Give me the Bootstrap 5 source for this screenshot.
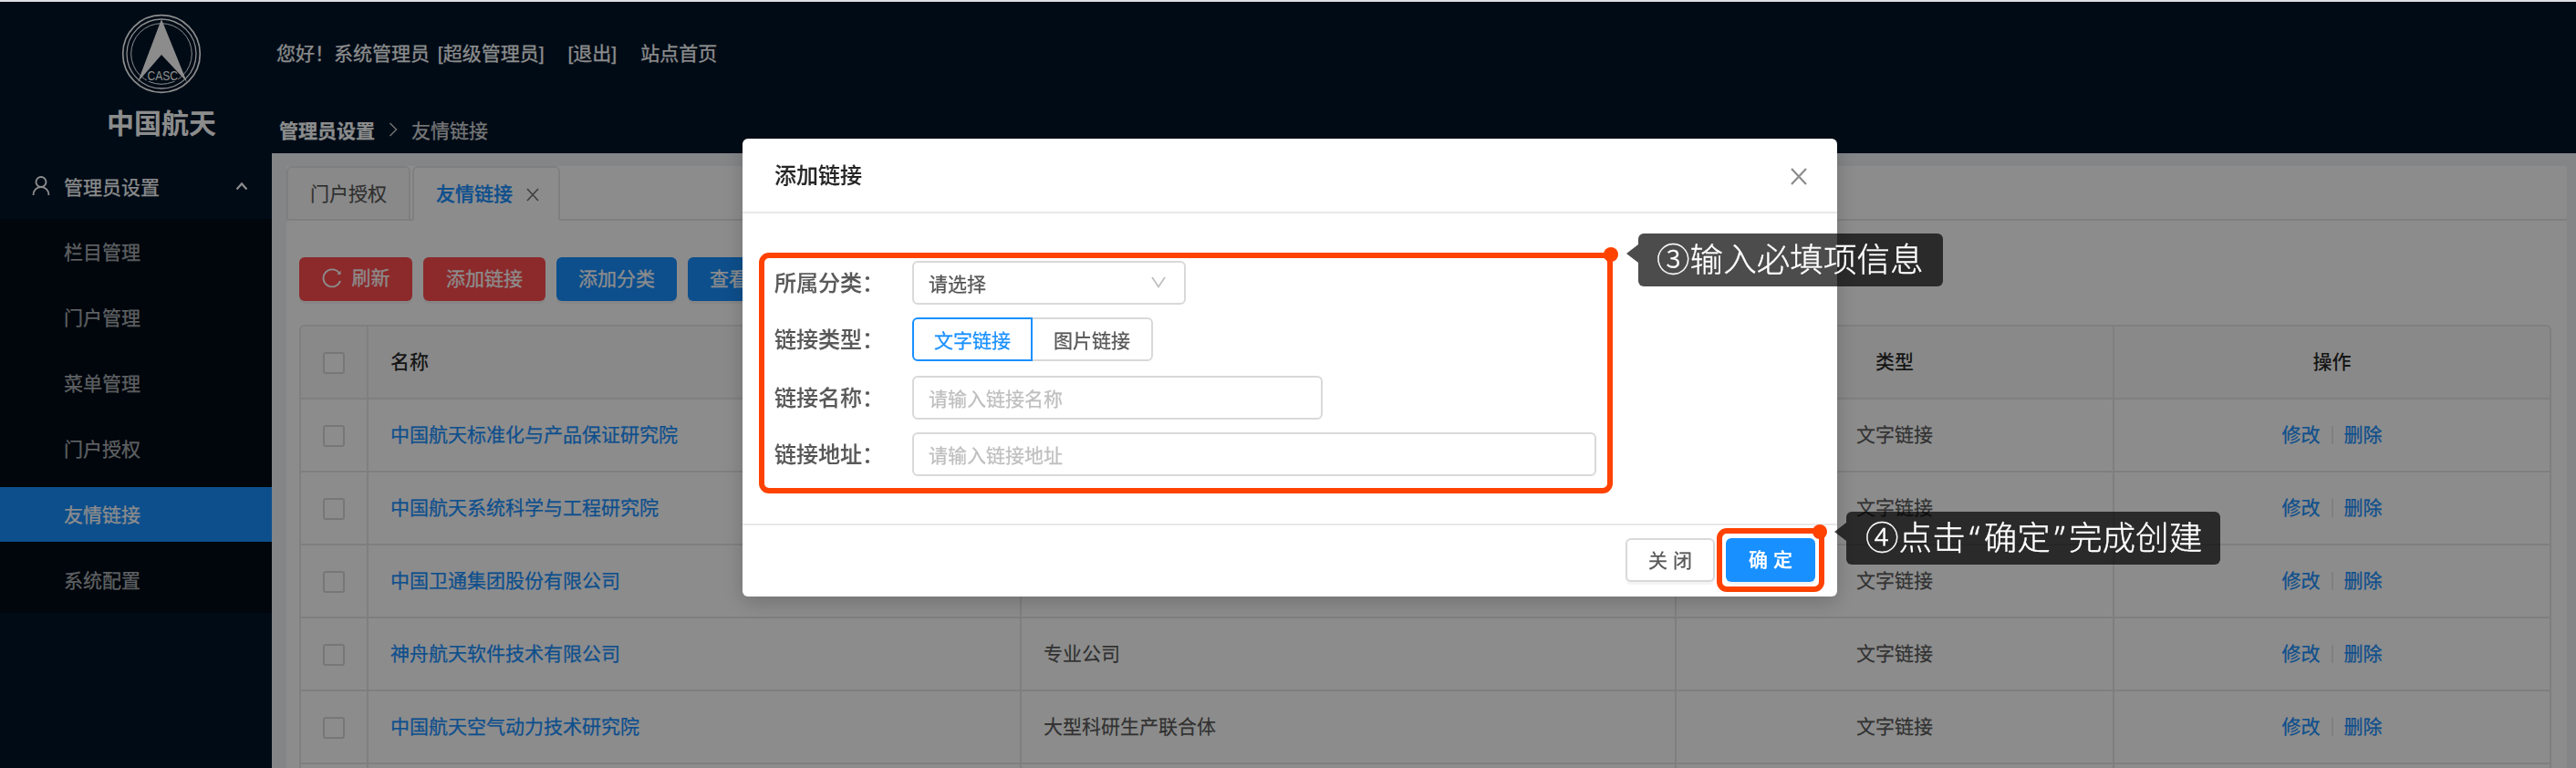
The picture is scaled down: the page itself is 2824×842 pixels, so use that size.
<!DOCTYPE html>
<html lang="zh-CN">
<head>
<meta charset="utf-8">
<title>友情链接</title>
<link href="https://cdn.jsdelivr.net/npm/bootstrap@5.3.0/dist/css/bootstrap.min.css" rel="stylesheet">
<style>
  :root { --ink: rgba(0,0,0,.65); --blue: #1890ff; --line: #e8e8e8; --mark: #ff4200; }
  html { overflow: hidden; }
  body { font-family: "Noto Sans CJK SC", "Liberation Sans", sans-serif; font-size: 21px; line-height: 32px; color: var(--ink); background: #dcdfe3; width: 2824px; height: 842px; padding-top: 2px; overflow: hidden; -webkit-text-stroke: .25px; }
  svg { display: block; flex: none; -webkit-text-stroke: 0; }
  .shell { height: 840px; background: #f0f2f5; overflow: hidden; }
  .side { width: 298px; background: #001529; flex: none; color: #fff; }
  .brand-box { height: 166px; padding: 10px 0 0 56px; }
  .logo-mark { margin-left: 76px; }
  .brand-name { font-size: 30px; font-weight: 700; line-height: 40px; margin-top: 7px; padding-left: 61px; -webkit-text-stroke: 0; }
  .side-group { height: 72px; padding: 0 26px 1px 34px; }
  .submenu { background: #000c17; padding: 6px 0; gap: 12px; color: rgba(255,255,255,.65); }
  .submenu a { height: 60px; padding-left: 70px; line-height: 59px; text-decoration: none; }
  .submenu a.active { background: var(--blue); color: #fff; }
  .topbar { height: 166px; background: #001529; color: #fff; }
  .hello { height: 113px; padding-left: 5px; gap: 26px; }
  .hello, .tabline, .abtn, .links { font-family: "Liberation Sans", "Noto Sans CJK SC", sans-serif; }
  .crumbs { height: 53px; padding-left: 8px; gap: 15px; }
  .sheet { margin: 14px 10px 0 16px; background: #fff; height: 660px; }
  .tabline { height: 60px; gap: 2px; box-shadow: inset 0 -2px var(--line); white-space: nowrap; }
  .tabitem { border: 2px solid var(--line); border-radius: 6px 6px 0 0; background: #fafafa; padding: 1px 24px 0; width: 136px; }
  .tabitem.on { background: #fff; border-bottom-color: #fff; color: var(--blue); font-weight: 500; width: 162px; gap: 14px; padding-right: 0; }
  .tools { padding: 40px 14px 26px; gap: 12px; }
  .abtn { height: 48px; border-radius: 6px; border: 0; color: #fff; font-size: 21px; line-height: 46px; padding: 0; box-shadow: 0 3px 0 rgba(0,0,0,.045); }
  .abtn.red { background: #ff4d4f; } .abtn.blue { background: var(--blue); }
  .grid-wrap { margin: 0 17px 0 14px; border: 2px solid var(--line); border-bottom: 0; border-radius: 6px 6px 0 0; overflow: hidden; }
  .links { margin: 0; table-layout: fixed; width: 100%; border-collapse: separate; border-spacing: 0; color: var(--ink); }
  .links th, .links td { height: 80px; padding: 0 24px; border-bottom: 2px solid var(--line); border-right: 2px solid var(--line); vertical-align: middle; box-sizing: border-box; font-weight: 400; }
  .links th { background: #fafafa; color: rgba(0,0,0,.85); font-weight: 500; -webkit-text-stroke: 0; }
  .links tr > :last-child { border-right: 0; }
  .links a:not([href]) { color: var(--blue); text-decoration: none; }
  .tick { width: 24px; height: 24px; border: 2px solid #d9d9d9; border-radius: 3px; background: #fff; margin-top: 2px; }
  .pipe { width: 2px; height: 20px; background: var(--line); }
  .mask { position: fixed; inset: 2px 0 0 0; background: rgba(0,0,0,.45); }
  .dialog { position: fixed; left: 814px; top: 152px; width: 1200px; height: 502px; background: #fff; border-radius: 6px; box-shadow: 0 6px 24px rgba(0,0,0,.2); }
  .dialog-head { height: 82px; border-bottom: 2px solid var(--line); padding: 0 32px 0 35px; }
  .dialog-head h5 { font-size: 24px; font-weight: 500; margin: 0; color: rgba(0,0,0,.85); line-height: 36px; padding-bottom: 2px; -webkit-text-stroke: .15px; }
  .dialog-form { height: 340px; padding: 52px 0 0 35px; }
  .dialog-form label { width: 151px; font-size: 24px; font-weight: 500; padding-bottom: 3px; -webkit-text-stroke: .15px; }
  .line { height: 48px; margin-bottom: 14px; }
  .field { height: 48px; border: 2px solid #d9d9d9; border-radius: 6px; background: #fff; padding: 0 20px 1px 16px; font-size: 21px; color: var(--ink); }
  .field::placeholder { color: #bfbfbf; opacity: 1; }
  .pick { width: 132px; height: 48px; border: 2px solid #d9d9d9; padding-bottom: 1px; }
  .pick.on { border-color: var(--blue); color: var(--blue); border-radius: 6px 0 0 6px; }
  .pick.off { border-left: 0; border-radius: 0 6px 6px 0; }
  .dialog-foot { height: 80px; border-top: 2px solid var(--line); padding: 14px 24px 0 0; gap: 12px; }
  .dialog-foot .abtn { width: 98px; }
  .abtn.plain { border: 2px solid #d9d9d9; color: var(--ink); line-height: 43px; background: #fff; }
  .frame { position: absolute; border: 6px solid var(--mark); border-radius: 11px; }
  .frame::after { content: ""; position: absolute; width: 16px; height: 16px; border-radius: 50%; background: var(--mark); }
  .frame.form { left: 18px; top: 124.5px; width: 936px; height: 264px; }
  .frame.form::after { right: -12px; top: -12px; }
  .frame.ok { left: 1068px; top: 427px; width: 118px; height: 70px; }
  .frame.ok::after { right: -9px; top: -10px; }
  .tip { position: absolute; height: 58px; border-radius: 6px; background: rgba(0,0,0,.7); color: #fff; font-size: 36.6px; font-weight: 300; line-height: 53px; white-space: nowrap; padding-left: 20px; -webkit-text-stroke: .35px; }
  .tip::before { content: ""; position: absolute; left: -13px; top: 12px; border: 10px solid transparent; border-left: 0; border-right: 13px solid rgba(0,0,0,.7); }
  .tip.one { left: 982px; top: 104px; width: 333.5px; }
  .tip.two { left: 1210px; top: 408.7px; width: 410px; padding-left: 21px; }
  .q { display: inline-block; width: 20px; text-align: center; font-family: "Noto Sans", sans-serif; }
</style>
</head>
<body>
<div class="shell d-flex">
  <aside class="side">
    <div class="brand-box">
      <svg class="logo-mark" width="90" height="94" viewBox="132 12 90 94" fill="none" stroke="#fff">
        <circle cx="177" cy="59" r="42.3" stroke-width="1.7"/>
        <circle cx="177" cy="59" r="38" stroke-width="1.3"/>
        <circle cx="177" cy="59" r="33.3" stroke-width="1"/>
        <rect x="161" y="76" width="34" height="13" fill="#001529" stroke="none"/>
        <path d="M177 21 205 90 177 60 151 90Z" fill="#fff" stroke="none"/>
        <text x="161.5" y="88" font-size="14" font-family="Liberation Sans, sans-serif" textLength="33.5" lengthAdjust="spacingAndGlyphs" fill="#fff" stroke="none">CASC</text>
      </svg>
      <div class="brand-name">中国航天</div>
    </div>
    <div class="side-group d-flex align-items-center">
      <svg width="22" height="22" viewBox="0 0 22 22" fill="none" stroke="#fff" stroke-width="1.900"><circle cx="11" cy="6.500" r="5.500"/><path d="M2.500 21C2.500 15.500 6.500 12 11 12S19.500 15.500 19.500 21"/></svg>
      <span style="margin-left:14px">管理员设置</span>
      <svg class="ms-auto" width="14" height="12" viewBox="0 0 14 12" fill="none" stroke="#fff" stroke-width="2.200"><path d="M1.500 9.500 7 3.500 12.500 9.500"/></svg>
    </div>
    <nav class="submenu d-flex flex-column">
      <a>栏目管理</a><a>门户管理</a><a>菜单管理</a><a>门户授权</a><a class="active">友情链接</a><a>系统配置</a>
    </nav>
  </aside>

  <main class="flex-grow-1">
    <header class="topbar">
      <div class="hello d-flex align-items-center"><span>您好！系统管理员 <span style="margin-left:3px">[超级管理员]</span></span><span>[退出]</span><span>站点首页</span></div>
      <div class="crumbs d-flex align-items-center">
        <b>管理员设置</b>
        <svg width="10" height="18" viewBox="0 0 10 18" fill="none" stroke="#ccc" stroke-width="1.500"><path d="M1.500 2 8.500 9 1.500 16"/></svg>
        <span style="color:#d9d9d9">友情链接</span>
      </div>
    </header>
    <section class="sheet">
      <div class="tabline d-flex">
        <div class="tabitem d-flex align-items-center">门户授权</div>
        <div class="tabitem on d-flex align-items-center">友情链接
          <svg width="16" height="16" viewBox="0 0 16 16" stroke="#757575" stroke-width="1.700"><path d="M2 2 14 15M14 2 2 15"/></svg>
        </div>
      </div>
      <div class="tools d-flex">
        <button class="btn abtn red d-flex justify-content-center" style="width:124px">
          <svg style="margin:11px 11px 0 0" width="22" height="24" viewBox="0 0 22 24" fill="none" stroke="#fff" stroke-width="1.900"><path d="M20 15A9.500 9.500 0 1 1 18.500 6"/><path d="M20.500 3.500V8H16.500Z" fill="#fff" stroke="none"/></svg><span>刷新</span></button>
        <button class="btn abtn red" style="width:134px">添加链接</button>
        <button class="btn abtn blue" style="width:132px">添加分类</button>
        <button class="btn abtn blue text-start ps-4" style="width:132px">查看</button>
      </div>
      <div class="grid-wrap">
        <table class="links">
          <colgroup><col style="width:74px"><col style="width:716px"><col style="width:718px"><col style="width:480px"><col></colgroup>
          <thead><tr><th><div class="tick"></div></th><th>名称</th><th></th><th class="text-center">类型</th><th class="text-center">操作</th></tr></thead>
          <tbody id="rows"></tbody>
        </table>
      </div>
    </section>
  </main>
</div>

<div class="mask"></div>

<div class="dialog">
  <div class="dialog-head d-flex align-items-center justify-content-between">
    <h5>添加链接</h5>
    <svg class="mt-1" width="20" height="20" viewBox="0 0 20 20" stroke="#8c8c8c" stroke-width="2.200"><path d="M2 1 18 18M18 1 2 18"/></svg>
  </div>
  <div class="dialog-form">
    <div class="line d-flex align-items-center"><label>所属分类：</label>
      <div class="field d-flex align-items-center justify-content-between" style="width:300px"><span>请选择</span>
        <svg width="16" height="14" viewBox="0 0 16 14" fill="none" stroke="#bfbfbf" stroke-width="1.800"><path d="M1 1 8 11.500 15 1"/></svg></div></div>
    <div class="line d-flex align-items-center mb-3"><label>链接类型：</label>
      <div class="pick on d-flex align-items-center justify-content-center">文字链接</div>
      <div class="pick off d-flex align-items-center justify-content-center">图片链接</div></div>
    <div class="line d-flex align-items-center"><label>链接名称：</label><input class="field" style="width:450px" placeholder="请输入链接名称"></div>
    <div class="line d-flex align-items-center"><label>链接地址：</label><input class="field" style="width:750px" placeholder="请输入链接地址"></div>
  </div>
  <div class="dialog-foot d-flex justify-content-end">
    <button class="btn abtn plain">关 闭</button>
    <button class="btn abtn blue fw-medium">确 定</button>
  </div>
  <div class="frame form"></div>
  <div class="frame ok"></div>
  <div class="tip one">③输入必填项信息</div>
  <div class="tip two">④点击<span class="q">“</span>确定<span class="q">”</span>完成创建</div>
</div>

<script src="https://cdn.jsdelivr.net/npm/bootstrap@5.3.0/dist/js/bootstrap.bundle.min.js"></script>
<script>
  const data = [
    ["中国航天标准化与产品保证研究院", ""],
    ["中国航天系统科学与工程研究院", ""],
    ["中国卫通集团股份有限公司", ""],
    ["神舟航天软件技术有限公司", "专业公司"],
    ["中国航天空气动力技术研究院", "大型科研生产联合体"]
  ];
  document.getElementById("rows").innerHTML = data.map(([name, kind]) =>
    `<tr><td><div class="tick"></div></td><td><a>${name}</a></td><td>${kind}</td><td class="text-center">文字链接</td>
     <td><div class="d-flex justify-content-center align-items-center" style="gap:12px"><a>修改</a><span class="pipe"></span><a>删除</a></div></td></tr>`).join("") +
    "<tr><td></td><td></td><td></td><td></td><td></td></tr>";
</script>
</body>
</html>
